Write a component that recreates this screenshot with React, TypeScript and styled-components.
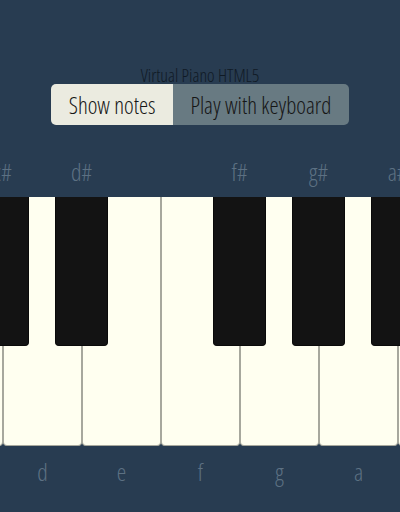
import React from "react";
import styled, { createGlobalStyle } from "styled-components";

const KEY_WIDTH = 79;

const notes = [
  { name: "c", sharp: true },
  { name: "d", sharp: true },
  { name: "e", sharp: false },
  { name: "f", sharp: true },
  { name: "g", sharp: true },
  { name: "a", sharp: true },
  { name: "b", sharp: false },
];

const GlobalStyle = createGlobalStyle`
  html, body {
    margin: 0;
    padding: 0;
    background: #283c51;
    overflow: hidden;
  }
`;

const Page = styled.div`
  width: 400px;
  height: 512px;
  overflow: hidden;
  background: #283c51;
  font-family: "Open Sans", "DejaVu Sans", sans-serif;
  font-stretch: 75%;
  font-weight: 300;
  padding-top: 67px;
  box-sizing: border-box;
`;

const Header = styled.header`
  display: flex;
  flex-direction: column;
  align-items: center;
`;

const Title = styled.h1`
  margin: 0;
  font-size: 18px;
  line-height: 17px;
  font-weight: 300;
  color: #101a25;
`;

const ButtonGroup = styled.div`
  display: flex;
  border-radius: 5px;
  overflow: hidden;
`;

const ToggleButton = styled.button<{ $active?: boolean }>`
  height: 41px;
  padding: 0 17.5px;
  border: none;
  font-family: inherit;
  font-stretch: 75%;
  font-weight: 300;
  font-size: 23px;
  color: #161616;
  background: ${(p) => (p.$active ? "#ebebe0" : "#687a82")};
  cursor: pointer;
`;

const Keyboard = styled.div`
  display: flex;
  margin-top: 72px;
  margin-left: ${-(KEY_WIDTH - 3)}px;
`;

const KeyColumn = styled.div`
  position: relative;
  width: ${KEY_WIDTH}px;
  flex: none;
  display: flex;
  flex-direction: column;
  align-items: center;
`;

const WhiteKey = styled.div`
  width: 100%;
  height: 249px;
  box-sizing: border-box;
  background: #fffff0;
  border-left: 1px solid #a7a89d;
  border-right: 1px solid #a7a89d;
  border-bottom: 1px solid #a7a89d;
  border-radius: 0 0 4px 4px;
`;

const NoteLabel = styled.span`
  margin-top: 11px;
  font-size: 24px;
  line-height: 30px;
  color: #5d7183;
`;

const BlackKey = styled.div`
  position: absolute;
  top: 0;
  left: ${KEY_WIDTH - 27}px;
  width: 53px;
  height: 149px;
  box-sizing: border-box;
  background: #131313;
  border: 1px solid #0a0a0a;
  border-top: none;
  border-radius: 0 0 4px 4px;
  z-index: 2;
`;

const SharpLabel = styled.span`
  position: absolute;
  top: -40px;
  left: ${KEY_WIDTH - 27}px;
  width: 53px;
  text-align: center;
  font-size: 24px;
  line-height: 30px;
  color: #5d7183;
`;

export default function App() {
  return (
    <Page>
      <GlobalStyle />
      <Header>
        <Title>Virtual Piano HTML5</Title>
        <ButtonGroup>
          <ToggleButton $active>Show notes</ToggleButton>
          <ToggleButton>Play with keyboard</ToggleButton>
        </ButtonGroup>
      </Header>
      <Keyboard>
        {notes.map((n) => (
          <KeyColumn key={n.name}>
            <WhiteKey />
            <NoteLabel>{n.name}</NoteLabel>
            {n.sharp && (
              <>
                <SharpLabel>{n.name}#</SharpLabel>
                <BlackKey />
              </>
            )}
          </KeyColumn>
        ))}
      </Keyboard>
    </Page>
  );
}
